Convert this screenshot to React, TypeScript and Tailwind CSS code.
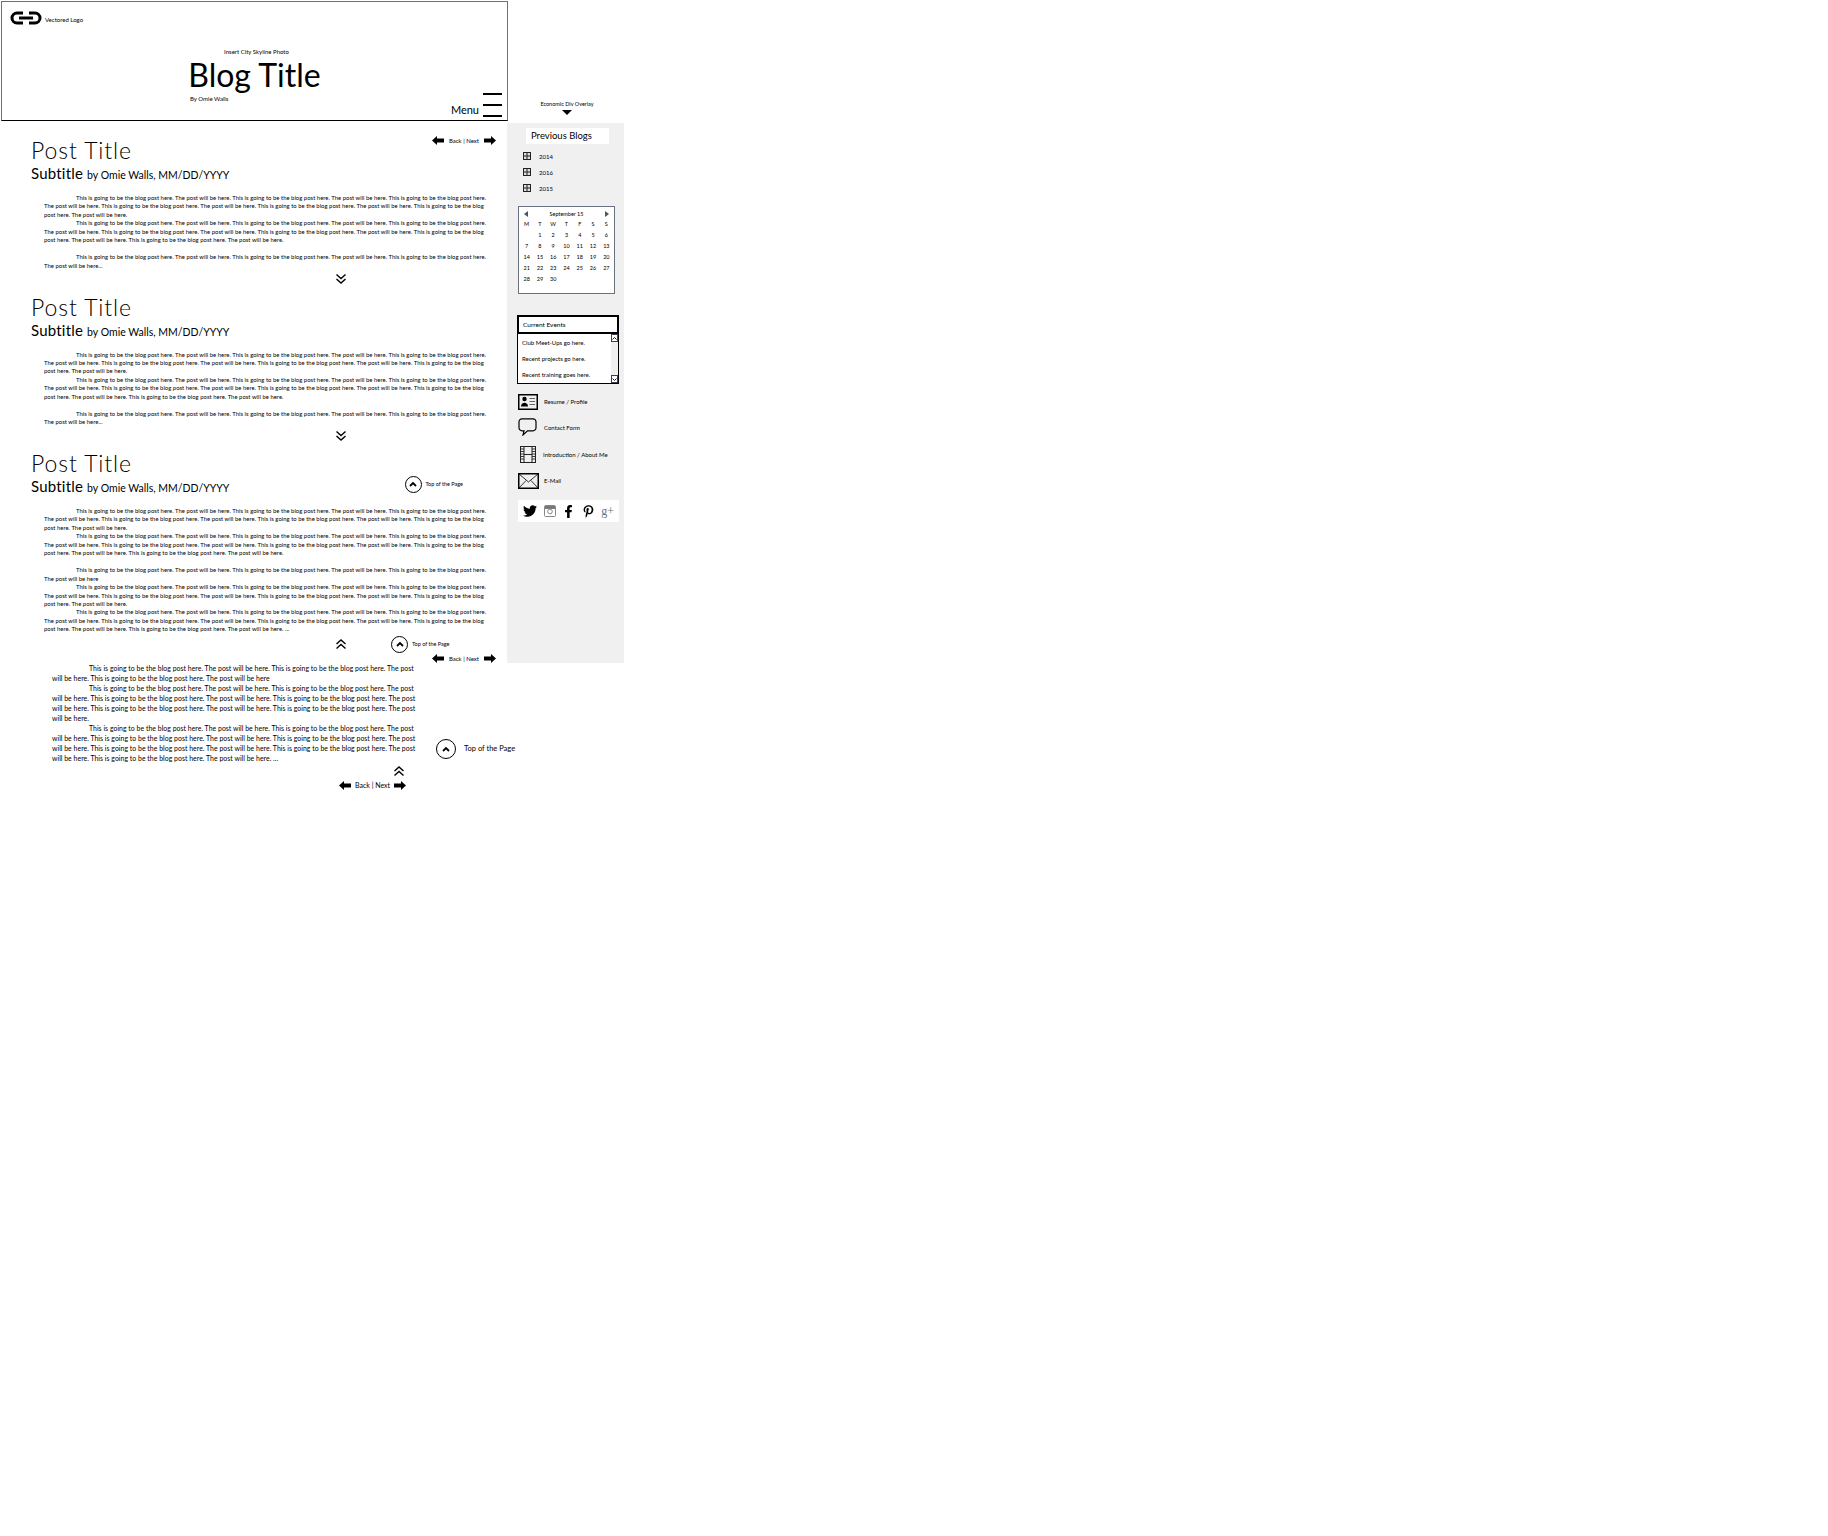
import { FaFacebookF, FaPinterestP, FaTwitter } from "react-icons/fa";

const PAIR = "This is going to be the blog post here. The post will be here.";
const pairs = (n: number) => Array(n).fill(PAIR).join(" ");

const POSTS = [
    [pairs(6), pairs(7), null, pairs(3) + ".."],
    [pairs(6), pairs(7), null, pairs(3) + ".."],
    [pairs(6), pairs(7), null, pairs(3).slice(0, -1), pairs(6), pairs(7) + " ..."],
];

const DAYS = ["", "1", "2", "3", "4", "5", "6", "7", "8", "9", "10", "11", "12", "13", "14", "15", "16", "17", "18", "19", "20", "21", "22", "23", "24", "25", "26", "27", "28", "29", "30"];

function Logo() {
    return (
        <svg width="32" height="14" viewBox="0 0 32 14" fill="none" stroke="black" strokeWidth="3">
            <path d="M13 2H7a5 5 0 0 0 0 10h6" />
            <path d="M19 2h6a5 5 0 0 1 0 10h-6" />
            <path d="M9 7h14" />
        </svg>
    );
}

function Arrow({ dir }: { dir: "left" | "right" }) {
    return (
        <svg width="12" height="9" viewBox="0 0 12 9" className={dir === "right" ? "rotate-180" : ""}>
            <path d="M0 4.5 5 0v2.5h7v4H5V9z" fill="black" />
        </svg>
    );
}

function BackNext({ large }: { large?: boolean }) {
    return (
        <div className={`flex items-center ${large ? "gap-1 text-[7px]" : "gap-[5px] text-[6px]"}`}>
            <Arrow dir="left" />
            <span>Back | Next</span>
            <Arrow dir="right" />
        </div>
    );
}

function Chevrons({ up }: { up?: boolean }) {
    return (
        <svg width="12" height="12" viewBox="0 0 12 12" fill="none" stroke="black" strokeWidth="1.4" className={up ? "rotate-180" : ""}>
            <path d="M1.5 1.5 6 5.5l4.500-4" />
            <path d="M1.5 6 6 10l4.500-4" />
        </svg>
    );
}

function TopOfPage({ large }: { large?: boolean }) {
    return (
        <div className={`flex items-center ${large ? "gap-2 text-[7.5px]" : "gap-1 text-[5.5px]"}`}>
            <span className={`flex items-center justify-center rounded-full border border-black ${large ? "size-[20px]" : "size-[17px]"}`}>
                <svg width="8" height="6" viewBox="0 0 8 6" fill="none" stroke="black" strokeWidth="1.800">
                    <path d="M1 5l3-3 3 3" />
                </svg>
            </span>
            <span>Top of the Page</span>
        </div>
    );
}

function PostBody({ paragraphs }: { paragraphs: (string | null)[] }) {
    return (
        <div className="ml-[44px] w-[451px] text-[5.9px] leading-[8.45px] tracking-[0.03px]">
            {paragraphs.map((text, i) =>
                text === null ? (
                    <div key={i} className="h-[8.45px]" />
                ) : (
                    <p key={i} className="indent-8">
                        {text}
                    </p>
                )
            )}
        </div>
    );
}

function PostHead({ right, nav }: { right?: boolean; nav?: boolean }) {
    return (
        <div className="relative pl-[31px]">
            <div className="flex items-start justify-between pr-[11px]">
                <h2 className="h-[27px] text-[23px] leading-[27px] font-light tracking-[0.9px]">Post Title</h2>
                {nav && (
                    <div className="mt-[-1px]">
                        <BackNext />
                    </div>
                )}
            </div>
            <div className="flex h-[20px] items-center justify-between pr-[44px]">
                <p className="text-[15px] leading-[20px] tracking-[0.2px]">
                    Subtitle <span className="text-[10.500px] tracking-normal">by Omie Walls, MM/DD/YYYY</span>
                </p>
                {right && (
                    <div className="mt-[-6px]">
                        <TopOfPage />
                    </div>
                )}
            </div>
        </div>
    );
}

function TreeItem({ year }: { year: string }) {
    return (
        <div className="flex h-[16px] items-center gap-2 pl-[16px] text-[6px]">
            <svg width="8" height="8" viewBox="0 0 8 8">
                <rect width="8" height="8" fill="#222" />
                <path d="M1 1h2.500v2.500H1zM4.500 1H7v2.500H4.500zM1 4.500h2.500V7H1zM4.500 4.500H7V7H4.500z" fill="#ddd" />
            </svg>
            {year}
        </div>
    );
}

function Calendar() {
    return (
        <div className="mt-[10px] ml-[11px] h-[88px] w-[97px] border border-gray-500 bg-white px-[1px] pt-[2px] text-[5.500px]">
            <div className="flex h-[10px] items-center justify-between px-[4px]">
                <span className="size-0 border-y-[3px] border-r-[4px] border-y-transparent border-r-gray-600" />
                <span>September 15</span>
                <span className="size-0 border-y-[3px] border-l-[4px] border-y-transparent border-l-gray-600" />
            </div>
            <div className="grid grid-cols-7 text-center leading-[11px]">
                {["M", "T", "W", "T", "F", "S", "S"].map((d, i) => (
                    <span key={i}>{d}</span>
                ))}
                {DAYS.map((d, i) => (
                    <span key={i}>{d}</span>
                ))}
            </div>
        </div>
    );
}

function CurrentEvents() {
    return (
        <div className="mt-[21px] ml-[10px] h-[69px] w-[102px] border border-black bg-white text-[6px]">
            <div className="flex h-[18px] items-center border-[1px] border-b-2 border-black pl-[4px] text-[6.500px]">Current Events</div>
            <div className="flex h-[49px]">
                <div className="flex-1 pt-[1px] pl-[4px] leading-[16px]">
                    <p>Club Meet-Ups go here.</p>
                    <p>Recent projects go here.</p>
                    <p>Recent training goes here.</p>
                </div>
                <div className="flex w-[7px] flex-col justify-between bg-[#f0f0f0]">
                    <ScrollButton />
                    <ScrollButton down />
                </div>
            </div>
        </div>
    );
}

function ScrollButton({ down }: { down?: boolean }) {
    return (
        <span className="flex h-[8px] items-center justify-center border border-gray-700 bg-white">
            <svg width="5" height="3" viewBox="0 0 5 3" fill="none" stroke="#222" className={down ? "rotate-180" : ""}>
                <path d="M.5 2.500l2-2 2 2" />
            </svg>
        </span>
    );
}

function ResumeIcon() {
    return (
        <svg width="20" height="16" viewBox="0 0 20 16" fill="none" stroke="black">
            <rect x=".75" y=".75" width="18.500" height="14.500" strokeWidth="1.500" />
            <circle cx="6.500" cy="5" r="2.200" fill="black" stroke="none" />
            <path d="M3 12.500c0-5 7-5 7 0z" fill="black" stroke="none" />
            <path d="M11.500 4.500H17M11.500 7.500H17M11.500 10.500H17" strokeWidth=".8" stroke="#444" />
        </svg>
    );
}

function BubbleIcon() {
    return (
        <svg width="19" height="18" viewBox="0 0 19 18" fill="none" stroke="black" strokeWidth="1.200">
            <path d="M4 .8h11a3 3 0 0 1 3 3v6a3 3 0 0 1-3 3H9.500L5 17l1-4.200H4a3 3 0 0 1-3-3v-6a3 3 0 0 1 3-3z" />
        </svg>
    );
}

function FilmIcon() {
    return (
        <svg width="16" height="17" viewBox="0 0 16 17" fill="none" stroke="#222">
            <rect x=".5" y=".5" width="15" height="16" />
            <path d="M4 .5v16M12 .5v16M4 8.500h8" />
            <path d="M.5 3h3.500M.5 5.500h3.500M.5 8h3.500M.5 10.500h3.500M.5 13h3.500M12 3h3.500M12 5.500h3.500M12 8h3.500M12 10.500h3.500M12 13h3.500" strokeWidth=".9" />
        </svg>
    );
}

function MailIcon() {
    return (
        <svg width="21" height="16" viewBox="0 0 21 16" fill="none" stroke="black">
            <rect x=".75" y=".75" width="19.500" height="14.500" strokeWidth="1.500" />
            <path d="M1 1l9.500 8L20 1M1 15l7-7.500M20 15l-7-7.500" strokeWidth=".8" />
        </svg>
    );
}

function InstagramIcon() {
    return (
        <svg width="12" height="12" viewBox="0 0 12 12" fill="none" stroke="#888">
            <rect x=".5" y=".5" width="11" height="11" rx="1" />
            <path d="M.5 3.500h11" />
            <rect x="1" y="1" width="10" height="2.500" fill="#777" stroke="none" />
            <circle cx="6" cy="6.500" r="2.300" />
        </svg>
    );
}

function Sidebar() {
    const links = [
        { icon: <ResumeIcon />, label: "Resume / Profile", gap: "gap-[6px]", h: "h-[23px]" },
        { icon: <BubbleIcon />, label: "Contact Form", gap: "gap-[7px]", h: "h-[28px]" },
        { icon: <div className="pl-[2px]"><FilmIcon /></div>, label: "Introduction / About Me", gap: "gap-[7px]", h: "h-[27px]" },
        { icon: <MailIcon />, label: "E-Mail", gap: "gap-[5px]", h: "h-[25px]" },
    ];

    return (
        <aside className="w-[117px] bg-[#f0f0f0] pt-[5px]">
            <div className="ml-[19px] flex h-[16px] w-[83px] items-center bg-white pl-[5px] text-[9.500px]">Previous Blogs</div>
            <div className="mt-[4px]">
                <TreeItem year="2014" />
                <TreeItem year="2016" />
                <TreeItem year="2015" />
            </div>
            <Calendar />
            <CurrentEvents />
            <div className="mt-[6px] ml-[11px] text-[6px]">
                {links.map((link) => (
                    <div key={link.label} className={`flex items-center ${link.gap} ${link.h}`}>
                        {link.icon}
                        <span className="whitespace-nowrap">{link.label}</span>
                    </div>
                ))}
            </div>
            <div className="mt-[7px] ml-[11px] flex h-[22px] w-[101px] items-center justify-between bg-white px-[5px]">
                <FaTwitter size={14} />
                <InstagramIcon />
                <FaFacebookF size={13} />
                <FaPinterestP size={13} />
                <span className="text-[12px] leading-none text-gray-500" style={{ fontFamily: "'Liberation Serif', serif" }}>
                    g+
                </span>
            </div>
        </aside>
    );
}

export default function App() {
    return (
        <div className="min-h-[1536px] w-[1828px] bg-white text-black" style={{ fontFamily: "Lato, 'Open Sans', sans-serif" }}>
            <div className="flex h-[123px] items-start">
                <header className="relative mt-px ml-px h-[120px] w-[507px] border border-t-gray-500 border-r-gray-500 border-b-black border-l-gray-500">
                    <div className="flex items-center gap-[3px] pt-[9px] pl-[8px] text-[6px]">
                        <Logo />
                        <span className="mt-[3px]">Vectored Logo</span>
                    </div>
                    <p className="mt-[23px] text-center text-[6px] leading-[8px] pl-[4px]">Insert City Skyline Photo</p>
                    <h1 className="mt-[1px] text-center text-[32px] leading-[36px]">Blog Title</h1>
                    <p className="mt-[2px] pl-[188px] text-[6px] leading-[8px]">By Omie Walls</p>
                    <div className="absolute right-[5px] bottom-[3px] flex items-end gap-[4px]">
                        <span className="text-[11px] leading-[14px]">Menu</span>
                        <div className="flex h-[24px] w-[19px] flex-col justify-between">
                            <span className="h-[2px] bg-black" />
                            <span className="h-[2px] bg-black" />
                            <span className="h-[2px] bg-black" />
                        </div>
                    </div>
                </header>
                <div className="mt-[101px] ml-[28px] flex w-[62px] flex-col items-center text-[5.500px] leading-[6px]">
                    <span className="whitespace-nowrap">Economic Div Overlay</span>
                    <span className="mt-[3px] size-0 border-x-[5px] border-t-[5px] border-x-transparent border-t-black" />
                </div>
            </div>

            <div className="flex items-stretch">
                <main className="w-[507px] pt-[14px]">
                    {POSTS.map((paragraphs, i) => (
                        <article key={i} className={i === 2 ? "" : "h-[156.500px]"}>
                            <PostHead nav={i === 0} right={i === 2} />
                            <div className="h-[10px]" />
                            <PostBody paragraphs={paragraphs} />
                            {i < 2 ? (
                                <div className="mt-[3px] ml-[335px]">
                                    <Chevrons />
                                </div>
                            ) : (
                                <div className="flex flex-col items-end pr-[11px]">
                                    <div className="mt-[2px] flex w-[161px] items-center">
                                        <Chevrons up />
                                        <div className="ml-[44px]">
                                            <TopOfPage />
                                        </div>
                                    </div>
                                    <div className="mt-[1px]">
                                        <BackNext />
                                    </div>
                                </div>
                            )}
                        </article>
                    ))}
                </main>
                <Sidebar />
            </div>

            <section className="flex w-[530px] pt-[-1px]">
                <div className="ml-[52px] w-[373px] pt-[0px]">
                    <div className="text-[6.900px] leading-[10px] tracking-[0.03px]">
                        <p className="indent-[37px]">{pairs(3).slice(0, -1)}</p>
                        <p className="indent-[37px]">{pairs(6)}</p>
                        <p className="indent-[37px]">{pairs(7) + " ..."}</p>
                    </div>
                    <div className="mt-[2px] ml-[341px]">
                        <Chevrons up />
                    </div>
                    <div className="mt-[3px] ml-[287px] w-[74px]">
                        <BackNext large />
                    </div>
                </div>
                <div className="mt-[76px] ml-[11px]">
                    <TopOfPage large />
                </div>
            </section>
        </div>
    );
}
